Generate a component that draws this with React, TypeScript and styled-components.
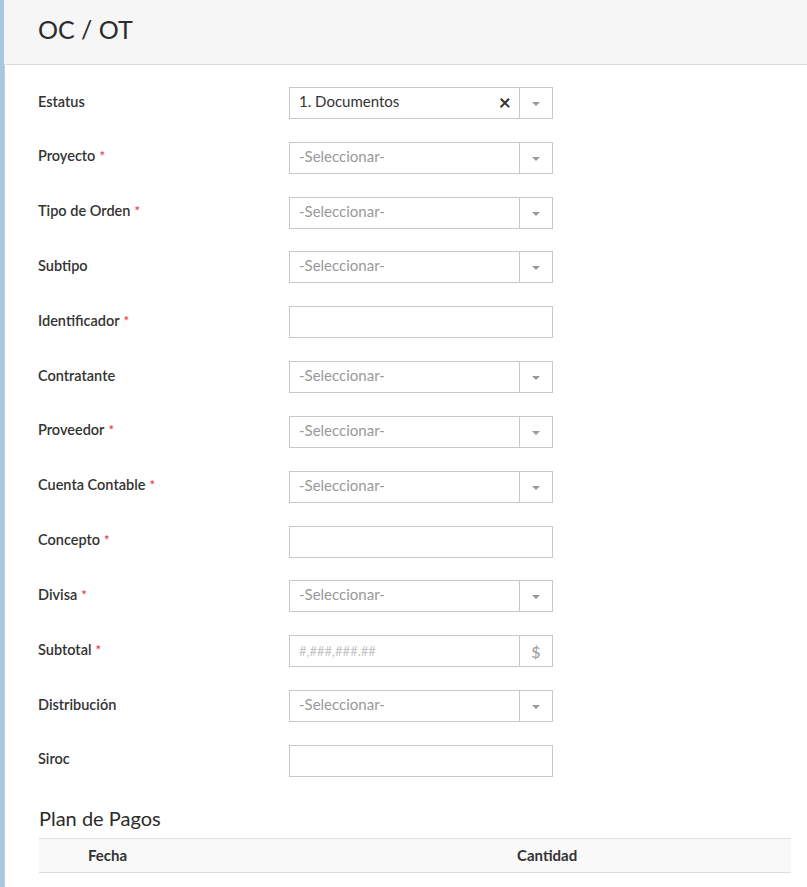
import styled, {createGlobalStyle} from 'styled-components'

const GlobalStyle = createGlobalStyle`
  html, body {
    margin: 0;
    padding: 0;
    background: #fff;
    font-family: Lato, 'Open Sans', sans-serif;
    color: #333;
  }
`

interface Field {
  label: string
  required?: boolean
  kind: 'select' | 'text' | 'money'
  value?: string
}

const fields: Field[] = [
  {label: 'Estatus', kind: 'select', value: '1. Documentos'},
  {label: 'Proyecto', required: true, kind: 'select'},
  {label: 'Tipo de Orden', required: true, kind: 'select'},
  {label: 'Subtipo', kind: 'select'},
  {label: 'Identificador', required: true, kind: 'text'},
  {label: 'Contratante', kind: 'select'},
  {label: 'Proveedor', required: true, kind: 'select'},
  {label: 'Cuenta Contable', required: true, kind: 'select'},
  {label: 'Concepto', required: true, kind: 'text'},
  {label: 'Divisa', required: true, kind: 'select'},
  {label: 'Subtotal', required: true, kind: 'money'},
  {label: 'Distribución', kind: 'select'},
  {label: 'Siroc', kind: 'text'},
]

function FieldControl({field}: {field: Field}) {
  if (field.kind === 'text') return <TextBox />
  if (field.kind === 'money')
    return (
      <Box>
        <Value $placeholder $small>#,###,###.##</Value>
        <Addon>$</Addon>
      </Box>
    )
  return (
    <Box>
      <Value $placeholder={!field.value}>{field.value ?? '-Seleccionar-'}</Value>
      {field.value && <Clear>×</Clear>}
      <Addon>
        <Caret />
      </Addon>
    </Box>
  )
}

export default function App() {
  return (
    <>
      <GlobalStyle />
      <Page>
        <Header>
          <Title>OC / OT</Title>
        </Header>
        <Body>
          <Form>
            {fields.map((f) => (
              <Row key={f.label}>
                <Label>
                  {f.label}
                  {f.required && <Star>*</Star>}
                </Label>
                <FieldControl field={f} />
              </Row>
            ))}
          </Form>
          <SectionTitle>Plan de Pagos</SectionTitle>
          <TableHead>
            <span />
            <HeadCell>Fecha</HeadCell>
            <HeadCell>Cantidad</HeadCell>
          </TableHead>
        </Body>
      </Page>
    </>
  )
}

const Page = styled.div`
  min-height: 887px;
  border-left: 4px solid #a6c8e1;
  box-shadow: inset 1px 0 0 #c9cfd4;
`

const Header = styled.header`
  height: 64px;
  background: #f6f6f6;
  border-bottom: 1px solid #dcdcdc;
  display: flex;
  align-items: center;
  padding-left: 34px;
`

const Title = styled.h1`
  margin: 0;
  font-size: 25px;
  font-weight: 400;
  color: #2b2b2b;
  padding-bottom: 6px;
`

const Body = styled.main`
  padding: 22px 16px 0 34px;
`

const Form = styled.div`
  display: flex;
  flex-direction: column;
  gap: 22.83px;
`

const Row = styled.div`
  display: grid;
  grid-template-columns: 251px 264px;
  align-items: center;
  height: 32px;
`

const Label = styled.label`
  font-size: 14.5px;
  font-weight: 600;
  color: #333;
  padding-bottom: 4px;
`

const Star = styled.span`
  color: #e8394a;
  font-size: 13px;
  margin-left: 4px;
`

const TextBox = styled.div`
  box-sizing: border-box;
  height: 32px;
  border: 1px solid #c8c8c8;
  background: #fff;
`

const Box = styled.div`
  box-sizing: border-box;
  height: 32px;
  border: 1px solid #c8c8c8;
  background: #fff;
  display: flex;
  align-items: center;
`

const Value = styled.span<{$placeholder?: boolean; $small?: boolean}>`
  flex: 1;
  padding-left: 9px;
  font-size: ${(p) => (p.$small ? '13px' : '15px')};
  color: ${(p) => (p.$small ? '#c4c4c4' : p.$placeholder ? '#999' : '#333')};
  padding-bottom: ${(p) => (p.$small ? '1px' : '4px')};
`

const Clear = styled.span`
  font-size: 21px;
  font-weight: 700;
  color: #333;
  margin-right: 8px;
  line-height: 1;
  padding-bottom: 3px;
`

const Addon = styled.span`
  width: 32px;
  height: 100%;
  border-left: 1px solid #c8c8c8;
  display: flex;
  align-items: center;
  justify-content: center;
  color: #999;
  font-size: 16px;
`

const Caret = styled.span`
  width: 0;
  height: 0;
  border-left: 4px solid transparent;
  border-right: 4px solid transparent;
  border-top: 4px solid #999;
  margin-top: 2px;
`

const SectionTitle = styled.h2`
  margin: 29px 0 8px 1px;
  font-size: 20px;
  font-weight: 400;
  color: #2b2b2b;
`

const TableHead = styled.div`
  margin-left: 1px;
  display: grid;
  grid-template-columns: 49px 429px 1fr;
  align-items: center;
  height: 33px;
  background: #f9f9f9;
  border-top: 1px solid #dedede;
  border-bottom: 1px solid #dedede;
`

const HeadCell = styled.span`
  font-size: 15px;
  font-weight: 700;
  color: #333;
`
